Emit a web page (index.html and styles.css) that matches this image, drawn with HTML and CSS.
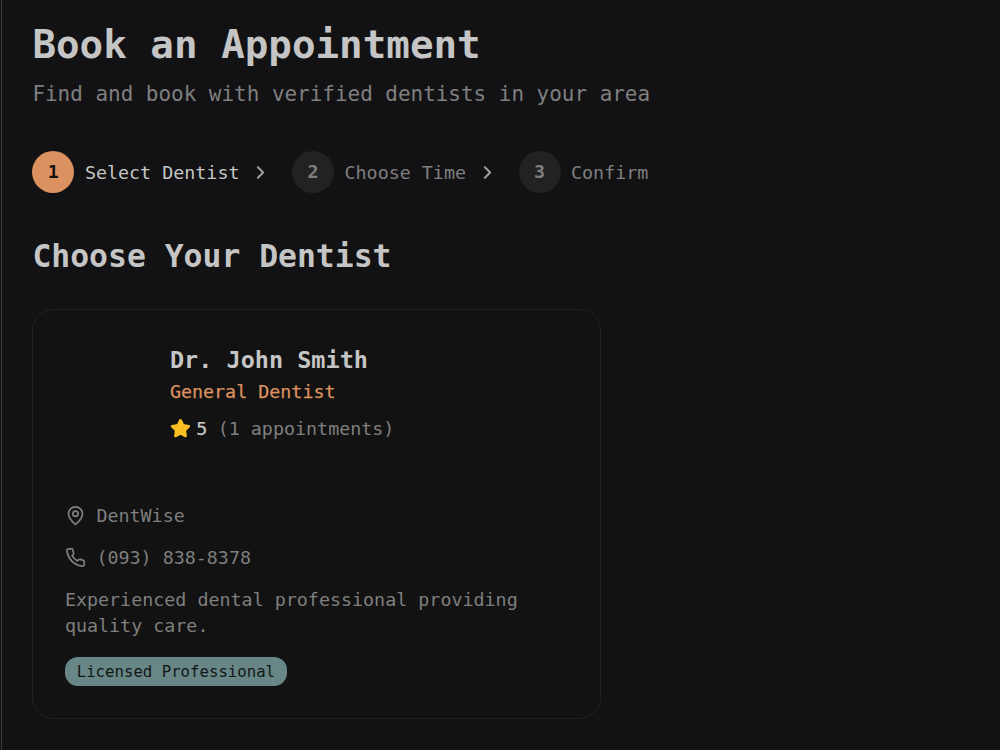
FILE: index.html
```html
<!DOCTYPE html>
<html lang="en">
<head>
    <meta charset="UTF-8">
    <meta name="viewport" content="width=device-width, initial-scale=1.0">
    <title>Book an Appointment</title>
    <link rel="stylesheet" href="styles.css">
</head>
<body>

    <main class="page">
        <h1 class="page-title">Book an Appointment</h1>
        <p class="page-subtitle">Find and book with verified dentists in your area</p>

        <div class="steps">
            <div class="step active">
                <span class="step-number">1</span>
                <span class="step-label">Select Dentist</span>
                <svg class="icon chevron" viewBox="0 0 24 24"><path d="m9 18 6-6-6-6"/></svg>
            </div>
            <div class="step">
                <span class="step-number">2</span>
                <span class="step-label">Choose Time</span>
                <svg class="icon chevron" viewBox="0 0 24 24"><path d="m9 18 6-6-6-6"/></svg>
            </div>
            <div class="step">
                <span class="step-number">3</span>
                <span class="step-label">Confirm</span>
            </div>
        </div>

        <h2 class="section-title">Choose Your Dentist</h2>

        <div class="card">
            <div class="card-header">
                <div class="avatar"></div>
                <div class="doctor">
                    <h3 class="doctor-name">Dr. John Smith</h3>
                    <p class="doctor-role">General Dentist</p>
                    <div class="rating">
                        <svg class="icon star" viewBox="0 0 24 24"><path d="M11.525 2.295a.53.53 0 0 1 .95 0l2.31 4.679a2.123 2.123 0 0 0 1.595 1.16l5.166.756a.53.53 0 0 1 .294.904l-3.736 3.638a2.123 2.123 0 0 0-.611 1.878l.882 5.14a.53.53 0 0 1-.771.56l-4.618-2.428a2.122 2.122 0 0 0-1.973 0L6.396 21.01a.53.53 0 0 1-.77-.56l.881-5.139a2.122 2.122 0 0 0-.611-1.879L2.16 9.795a.53.53 0 0 1 .294-.906l5.165-.755a2.122 2.122 0 0 0 1.597-1.16z"/></svg>
                        <span class="score">5</span>
                        <span class="count">(1 appointments)</span>
                    </div>
                </div>
            </div>

            <div class="card-content">
                <div class="info">
                    <svg class="icon" viewBox="0 0 24 24"><path d="M20 10c0 4.993-5.539 10.193-7.399 11.799a1 1 0 0 1-1.202 0C9.539 20.193 4 14.993 4 10a8 8 0 0 1 16 0"/><circle cx="12" cy="10" r="3"/></svg>
                    <span>DentWise</span>
                </div>
                <div class="info">
                    <svg class="icon" viewBox="0 0 24 24"><path d="M22 16.92v3a2 2 0 0 1-2.18 2 19.79 19.79 0 0 1-8.63-3.07 19.5 19.5 0 0 1-6-6 19.79 19.79 0 0 1-3.07-8.67A2 2 0 0 1 4.11 2h3a2 2 0 0 1 2 1.72 12.84 12.84 0 0 0 .7 2.81 2 2 0 0 1-.45 2.11L8.09 9.91a16 16 0 0 0 6 6l1.27-1.27a2 2 0 0 1 2.11-.45 12.84 12.84 0 0 0 2.81.7A2 2 0 0 1 22 16.92z"/></svg>
                    <span>(093) 838-8378</span>
                </div>
                <p class="bio">Experienced dental professional providing quality care.</p>
                <span class="badge">Licensed Professional</span>
            </div>
        </div>
    </main>

</body>
</html>
```
FILE: styles.css
```css
:root {
    --bg: #121214;
    --card: #121212;
    --border: #222222;
    --text: #c5c5c5;
    --muted: #7f7f7f;
    --primary: #db9160;
    --secondary: #678685;
}

* {
    box-sizing: border-box;
    margin: 0;
    padding: 0;
}

body {
    font-family: 'DejaVu Sans Mono', 'Liberation Mono', monospace;
    font-size: 18.35px;
    line-height: 26.25px;
    background: var(--bg);
    color: var(--text);
    height: 750px;
    overflow: hidden;
}

.page {
    height: 750px;
    margin-left: 1px;
    padding: 21px 30px 0 30.4px;
    border-left: 1px solid #3c3c3e;
}

.page-title {
    font-size: 39.2px;
    line-height: 47.5px;
    font-weight: 700;
    margin-bottom: 10.5px;
}

.page-subtitle {
    font-size: 20.95px;
    line-height: 31.5px;
    color: var(--muted);
    margin-bottom: 40.5px;
}

.steps {
    display: flex;
    gap: 21px;
    margin-bottom: 42px;
}

.step {
    display: flex;
    align-items: center;
    gap: 10.5px;
    color: var(--muted);
}

.step.active {
    color: var(--text);
}

.step-number {
    width: 42px;
    height: 42px;
    padding-top: 1px;
    border-radius: 50%;
    background: #222222;
    display: flex;
    align-items: center;
    justify-content: center;
    font-weight: 700;
}

.step.active .step-number {
    background: var(--primary);
    color: #17120f;
}

.step-label {
    padding-top: 2px;
}

.icon {
    width: 21px;
    height: 21px;
    flex-shrink: 0;
    fill: none;
    stroke: currentColor;
    stroke-width: 2;
    stroke-linecap: round;
    stroke-linejoin: round;
}

.chevron {
    color: #a0a0a0;
    stroke-width: 2.2;
}

.section-title {
    font-size: 31.4px;
    line-height: 42px;
    font-weight: 700;
    margin-bottom: 32px;
}

.card {
    width: 569px;
    height: 410px;
    padding: 31.5px;
    background: var(--card);
    border: 1px solid var(--border);
    border-radius: 21px;
}

.card-header {
    display: flex;
    gap: 21px;
    height: 160.5px;
}

.avatar {
    width: 84px;
    height: 84px;
    border-radius: 50%;
}

.doctor-name {
    font-size: 23.5px;
    line-height: 36.5px;
    font-weight: 700;
    margin-bottom: 1px;
}

.doctor-role {
    color: var(--primary);
    margin-bottom: 8.75px;
    -webkit-text-stroke: 0.25px var(--primary);
}

.rating {
    display: flex;
    align-items: center;
}

.rating span {
    padding-top: 2px;
}

.star {
    fill: #fbbf24;
    stroke: #fbbf24;
    margin-right: 5.25px;
}

.score {
    -webkit-text-stroke: 0.25px var(--text);
}

.count {
    color: var(--muted);
    margin-left: 10.5px;
}

.card-content {
    color: var(--muted);
}

.info {
    display: flex;
    align-items: center;
    gap: 10.5px;
    height: 26.25px;
    margin-bottom: 15.75px;
}

.info span {
    padding-top: 1px;
}

.bio {
    padding-top: 1px;
    margin-bottom: 17.5px;
}

.badge {
    display: flex;
    align-items: center;
    justify-content: center;
    width: 222px;
    height: 29px;
    padding-top: 1px;
    border-radius: 13px;
    background: var(--secondary);
    color: #111616;
    font-size: 15.7px;
}
```
